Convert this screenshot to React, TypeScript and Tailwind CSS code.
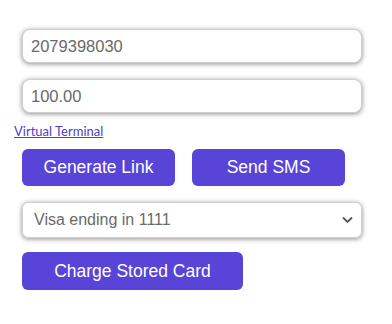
export default function App() {
  const inputCls =
    "block h-[34px] w-[340px] ml-[8px] rounded-[8px] border border-[#d0d0d0] bg-white px-[8px] text-[16.5px] text-[#6a6a6a] shadow-[0_1px_5px_rgba(0,0,0,0.45)] outline-none";
  const btn =
    "h-[37px] rounded-[6px] bg-[#5844d6] text-white text-[17.5px] flex items-center justify-center";
  return (
    <div
      className="w-[392px] h-[324px] bg-white pl-[14px] pt-[29px] flex flex-col"
      style={{ fontFamily: '"Liberation Sans", Arial, sans-serif' }}
    >
      <input className={inputCls} defaultValue="2079398030" />
      <input className={inputCls + " mt-[16px]"} defaultValue="100.00" />
      <a
        href="#"
        className="mt-[10px] block h-[16px] leading-[16px] text-[13px] text-[#4a3fcf] underline"
        style={{ fontFamily: 'Lato, "Open Sans", sans-serif' }}
      >
        Virtual Terminal
      </a>
      <div className="mt-[10px] ml-[8px] flex gap-[17px]">
        <div className={btn + " w-[153px]"}>Generate Link</div>
        <div className={btn + " w-[153px]"}>Send SMS</div>
      </div>
      <div className="mt-[16px] ml-[8px] relative h-[36px] w-[340px] rounded-[6px] border border-[#d0d0d0] bg-white shadow-[0_1px_5px_rgba(0,0,0,0.45)] flex items-center pl-[11px] text-[16px] text-[#6a6a6a]">
        Visa ending in 1111
        <svg
          className="absolute right-[8px] top-1/2 -translate-y-1/2"
          width="11"
          height="7"
          viewBox="0 0 11 7"
        >
          <path d="M1 1 L5.5 5.5 L10 1" fill="none" stroke="#555" strokeWidth="1.8" />
        </svg>
      </div>
      <div className={btn + " mt-[14px] ml-[8px] w-[221px] h-[38px]"}>Charge Stored Card</div>
    </div>
  );
}
